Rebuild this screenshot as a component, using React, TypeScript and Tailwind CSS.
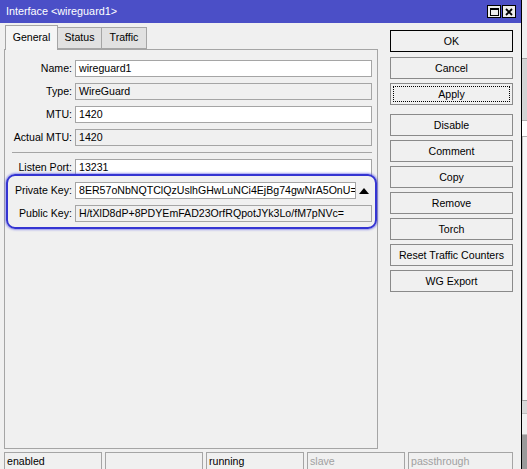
import React from "react";

const font = { fontFamily: '"Liberation Sans", Arial, sans-serif' };

function Field({ label, value, editable }: { label: string; value: string; editable?: boolean }) {
  return (
    <div className="flex items-center h-[17px]">
      <span className="w-[70px] text-right pr-[3px] shrink-0">{label}</span>
      <div
        className={`flex-1 h-[17px] border border-[#a5a5a5] pl-[3px] leading-[15px] whitespace-nowrap overflow-hidden ${
          editable ? "bg-white" : "bg-[#f0f0f0]"
        }`}
      >
        {value}
      </div>
    </div>
  );
}

function Btn({ label, primary, focus }: { label: string; primary?: boolean; focus?: boolean }) {
  return (
    <div
      className={`h-[22px] border ${primary ? "border-black" : "border-[#8a8a8a]"} bg-[#f0f0f0] p-[2px] flex`}
    >
      <div
        className={`flex-1 flex items-center justify-center leading-none ${
          focus ? "border border-dotted border-black" : "border border-transparent"
        }`}
      >
        {label}
      </div>
    </div>
  );
}

export default function App() {
  return (
    <div className="w-[527px] h-[469px] flex overflow-hidden text-[10.6px] text-black" style={font}>
      {/* dialog window */}
      <div className="w-[522px] shrink-0 flex flex-col bg-[#f0f0f0] border-r border-black">
        {/* title bar */}
        <div className="h-[23px] shrink-0 bg-[#4b4fc7] flex items-center pl-[6px] pr-[5px] text-white text-[10.8px]">
          <span className="flex-1">Interface &lt;wireguard1&gt;</span>
          <div className="flex gap-[1px]">
            <div className="w-[14px] h-[13px] bg-[#ececec] border border-black flex items-center justify-center">
              <div className="w-[9px] h-[8px] border border-black border-t-2" />
            </div>
            <div className="w-[14px] h-[13px] bg-[#ececec] border border-black flex items-center justify-center">
              <svg width="8" height="8" viewBox="0 0 8 8">
                <path d="M1 1L7 7M7 1L1 7" stroke="#000" strokeWidth="1.8" />
              </svg>
            </div>
          </div>
        </div>

        <div className="flex flex-1">
          {/* left: tabs + panel */}
          <div className="w-[378px] pl-[4px] pt-[2px] flex flex-col">
            <div className="flex items-end h-[24px] pl-[1px]">
              <div className="h-[25px] w-[53px] bg-[#f5f5f5] border border-b-0 border-[#a5a5a5] flex items-center justify-center -mb-[1px] relative z-10">
                General
              </div>
              <div className="h-[22px] w-[44px] bg-[#e1e1e1] border border-l-0 border-[#a5a5a5] flex items-center justify-center">
                Status
              </div>
              <div className="h-[22px] w-[45px] bg-[#e1e1e1] border border-l-0 border-[#a5a5a5] flex items-center justify-center">
                Traffic
              </div>
            </div>
            <div className="relative h-[400px] border border-[#a5a5a5] bg-[#f0f0f0] pt-[10px] pr-[5px] flex flex-col">
              <Field label="Name:" value="wireguard1" editable />
              <div className="mt-[6px]">
                <Field label="Type:" value="WireGuard" />
              </div>
              <div className="mt-[6px]">
                <Field label="MTU:" value="1420" editable />
              </div>
              <div className="mt-[6px]">
                <Field label="Actual MTU:" value="1420" />
              </div>
              <div className="mt-[6px] ml-[7px] border-t border-[#a5a5a5]" />
              <div className="mt-[6px]">
                <Field label="Listen Port:" value="13231" editable />
              </div>
              <div className="mt-[6px] flex items-center h-[17px]">
                <span className="w-[70px] text-right pr-[3px] shrink-0">Private Key:</span>
                <div className="flex-1 h-[17px] border border-[#a5a5a5] bg-white pl-[3px] leading-[15px] whitespace-nowrap overflow-hidden">
                  8ER57oNbNQTClQzUslhGHwLuNCi4EjBg74gwNrA5OnU=
                </div>
                <div className="w-[16px] flex justify-center">
                  <svg width="10" height="6" viewBox="0 0 10 6">
                    <path d="M0 6L5 0L10 6Z" fill="#000" />
                  </svg>
                </div>
              </div>
              <div className="mt-[6px]">
                <Field label="Public Key:" value="H/tXlD8dP+8PDYEmFAD23OrfRQpotJYk3Lo/fM7pNVc=" />
              </div>
              {/* annotation ring */}
              <div className="absolute left-[1px] top-[124px] w-[371px] h-[55px] rounded-[9px] border-[2.5px] border-[#3434d2] shadow-[0_0_2px_1px_rgba(90,90,230,0.6)] pointer-events-none" />
            </div>
          </div>

          {/* right: buttons */}
          <div className="ml-[12px] w-[123px] pt-[7px] flex flex-col">
            <Btn label="OK" primary />
            <div className="mt-[5px] flex flex-col gap-[4px]">
              <Btn label="Cancel" />
              <Btn label="Apply" focus />
            </div>
            <div className="mt-[9px] flex flex-col gap-[4px]">
              <Btn label="Disable" />
              <Btn label="Comment" />
              <Btn label="Copy" />
              <Btn label="Remove" />
              <Btn label="Torch" />
              <Btn label="Reset Traffic Counters" />
              <Btn label="WG Export" />
            </div>
          </div>
        </div>

        {/* status bar */}
        <div className="h-[17px] shrink-0 flex gap-[3px] pl-[4px] pr-[8px]">
          <div className="w-[98px] border border-b-0 border-[#a5a5a5] pl-[2px] leading-[17px]">enabled</div>
          <div className="w-[98px] border border-b-0 border-[#a5a5a5]" />
          <div className="w-[98px] border border-b-0 border-[#a5a5a5] pl-[2px] leading-[17px]">running</div>
          <div className="w-[98px] border border-b-0 border-[#a5a5a5] pl-[2px] leading-[17px] text-[#a0a0a0]">slave</div>
          <div className="flex-1 border border-b-0 border-[#a5a5a5] pl-[2px] leading-[17px] text-[#a0a0a0]">passthrough</div>
        </div>
      </div>

      {/* background behind the window */}
      <div className="flex-1 flex flex-col">
        <div className="h-[58px] bg-[#f0f0f0]" />
        <div className="h-[62px] bg-[#d4d4d4] border-t border-[#a0a0a0]" />
        <div className="h-[17px] bg-white border-y border-[#b0b0b0]" />
        <div className="h-[263px] bg-[#f7f7f7] border-l border-[#c0c0c0]" />
        <div className="h-[13px] bg-[#d8d8d8] border-t border-[#a0a0a0]" />
        <div className="h-[22px] bg-[#f0f0f0] border-y border-[#c0c0c0]" />
        <div className="flex-1 bg-[#9a9a9a]" />
      </div>
    </div>
  );
}
